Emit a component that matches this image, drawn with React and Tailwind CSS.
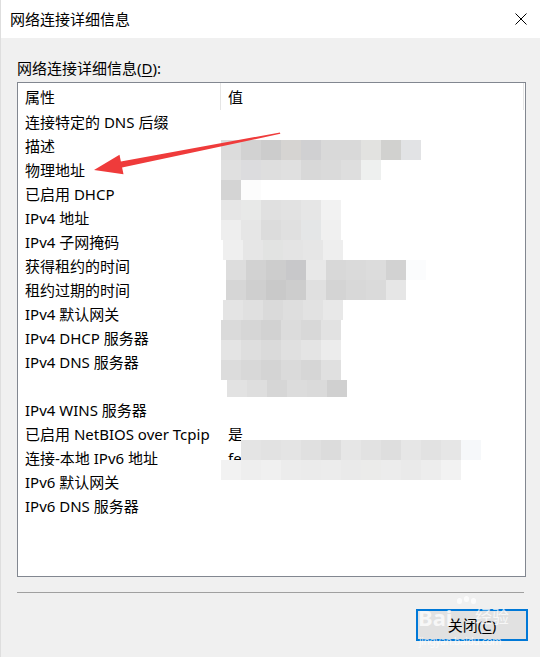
import React from 'react';

const rows = [
  { name: '连接特定的 DNS 后缀', value: '' },
  { name: '描述', value: '' },
  { name: '物理地址', value: '' },
  { name: '已启用 DHCP', value: '' },
  { name: 'IPv4 地址', value: '' },
  { name: 'IPv4 子网掩码', value: '' },
  { name: '获得租约的时间', value: '' },
  { name: '租约过期的时间', value: '' },
  { name: 'IPv4 默认网关', value: '' },
  { name: 'IPv4 DHCP 服务器', value: '' },
  { name: 'IPv4 DNS 服务器', value: '' },
  { name: '', value: '' },
  { name: 'IPv4 WINS 服务器', value: '' },
  { name: '已启用 NetBIOS over Tcpip', value: '是' },
  { name: '连接-本地 IPv6 地址', value: 'fe80::' },
  { name: 'IPv6 默认网关', value: '' },
  { name: 'IPv6 DNS 服务器', value: '' },
];

// 打码区域：每行 20px 的色块
const mosaic = [
  { y: 140, x: 220, c: ['#dcdcdc', '#d2d2d2', '#cccccc', '#d6d4d2', '#d0d0d2', '#d9d9d9', '#d9d9d9', '#e2e2e0', '#d1d1cf', '#e2e3e5'] },
  { y: 160, x: 220, c: ['#e0e0e0', '#dcdcde', '#dedede', '#e0e0e0', '#d8d8d8', '#dadada', '#dedede', '#eef0ef'] },
  { y: 180, x: 220, c: ['#d4d4d4', '#fcfcfc'] },
  { y: 200, x: 220, c: ['#e6e6e6', '#e8e9e8', '#e0e0e0', '#e2e2e2', '#e6e6e6', '#f2f2f2'] },
  { y: 220, x: 220, c: ['#eeeeee', '#e6e6e6', '#dcdcdc', '#e0e0e0', '#e4e6e7', '#f0f0f0'] },
  { y: 240, x: 222, c: ['#efefef', '#e6e6e6', '#e2e3e2', '#e4e4e4', '#e6e6e6', '#eeeeee'] },
  { y: 260, x: 225, c: ['#dddddd', '#d2d2d2', '#cdcdcd', '#c8c8ca', '#e8e8e8', '#d8d8d8', '#dadada', '#dcdcdc', '#d2d2d2', '#fbfcfd'] },
  { y: 280, x: 225, c: ['#d6d6d6', '#cfcfcf', '#c9c9c9', '#cdcdcd', '#e0e0e0', '#d4d4d4', '#d8d8d8', '#dadada', '#e6e6e6'] },
  { y: 300, x: 222, c: ['#e4e4e4', '#e0e0e0', '#dadada', '#dedede', '#e2e2e2', '#e8e8e8'] },
  { y: 320, x: 220, c: ['#dadada', '#d6d6d6', '#d2d2d2', '#dcdcdc', '#d8d8d8', '#e2e2e2'] },
  { y: 340, x: 220, c: ['#e4e4e4', '#dedede', '#dadada', '#e0e0e0', '#e4e4e4', '#ececec'] },
  { y: 360, x: 220, c: ['#dcdcdc', '#d8d8d8', '#d4d4d4', '#dadada', '#d6d6d6', '#e0e0e0'] },
  { y: 380, x: 226, h: 17, c: ['#e2e2e2', '#dedede', '#d6d6d6', '#dcdcdc', '#dadada', '#d0d0d0'] },
  { y: 440, x: 240, c: ['#e4e4e4', '#e2e2e2', '#e4e4e4', '#e0e0e0', '#dcdcdc', '#e6e6e6', '#e2e2e2', '#dedede', '#e6e6e6', '#e2e2e2', '#e6e6e6', '#f6f8fa'] },
  { y: 460, x: 220, c: ['#f2f2f2', '#eeeeee', '#f0f0f0', '#ececec', '#ebebeb', '#ececec', '#eaeaea', '#ebebea', '#ececec', '#eaeaea', '#ededed', '#f2f2f2'] },
];

const Overlay = () => (
  <svg className="absolute left-0 top-0 pointer-events-none" width="540" height="657" viewBox="0 0 540 657">
    {mosaic.map((r) =>
      r.c.map((fill, i) => (
        <rect key={`${r.y}-${i}`} x={r.x + i * 20} y={r.y} width="20" height={r.h || 20} fill={fill} />
      ))
    )}
    {/* 红色箭头 */}
    <polygon
      points="93,170 118.5,154.7 119.9,161.6 279,132.4 279.3,133.8 121.1,167.4 122.5,174.3"
      fill="#ef3b3b"
    />
  </svg>
);

const Watermark = () => (
  <div className="absolute left-[416px] top-[598px] w-[112px] h-[50px] pointer-events-none text-white/75">
    <div className="absolute left-[40px] top-0 flex gap-[2px]">
      <span className="w-[5px] h-[6px] rounded-full bg-white/75" />
      <span className="w-[5px] h-[6px] rounded-full bg-white/75 -mt-[2px]" />
      <span className="w-[5px] h-[6px] rounded-full bg-white/75" />
    </div>
    <span className="absolute left-[1px] top-[8px] text-[22px] font-bold leading-none">Bai</span>
    <span className="absolute left-[58px] top-[10px] text-[17px] leading-none">经验</span>
    <span className="absolute left-[2px] top-[38px] text-[10px] leading-none tracking-tight">jingyan.baidu.com</span>
  </div>
);

export default function App() {
  return (
    <div className="relative w-[540px] h-[657px] bg-[#f0f0f0] border-l border-[#dedede] overflow-hidden text-black text-[15px] font-[family-name:'Noto_Sans','Noto_Sans_CJK_SC',sans-serif]">
      {/* 标题栏 */}
      <div className="h-[38px] bg-white flex items-center justify-between pl-[9px] pr-[13px]">
        <span className="leading-5">网络连接详细信息</span>
        <svg width="12" height="12" viewBox="0 0 12 12">
          <path d="M0.5 0.5 L11.5 11.5 M11.5 0.5 L0.5 11.5" stroke="#000" strokeWidth="1" fill="none" />
        </svg>
      </div>

      <div className="pl-[16px]">
        <div className="mt-[20px] h-[20px] leading-5">
          网络连接详细信息(<span className="underline underline-offset-2">D</span>):
        </div>

        {/* 列表 */}
        <div className="mt-[4px] w-[509px] h-[495px] border border-[#828790] bg-white">
          <div className="h-[27px] flex items-center">
            <div className="w-[202px] pl-[7px] leading-5">属性</div>
            <div className="w-px h-[27px] bg-[#e5e5e5]" />
            <div className="flex-1 pl-[7px] leading-5">值</div>
            <div className="w-px h-[27px] bg-[#e5e5e5] mr-px" />
          </div>
          {rows.map((r, i) => (
            <div key={i} className="h-[24px] flex items-center whitespace-nowrap">
              <div className="w-[203px] pl-[7px] leading-5">{r.name}</div>
              <div className="flex-1 pl-[7px] leading-5">{r.value}</div>
            </div>
          ))}
        </div>

        <div className="mt-[15px] w-[507px] h-px bg-[#a0a0a0]" />

        <div className="mt-[16px] ml-[399px] w-[112px] h-[32px] border-2 border-[#0078d7] bg-[#e1e1e1] flex items-center justify-center leading-5">
          关闭(<span className="underline underline-offset-2">C</span>)
        </div>
      </div>

      <Overlay />
      <Watermark />
    </div>
  );
}
